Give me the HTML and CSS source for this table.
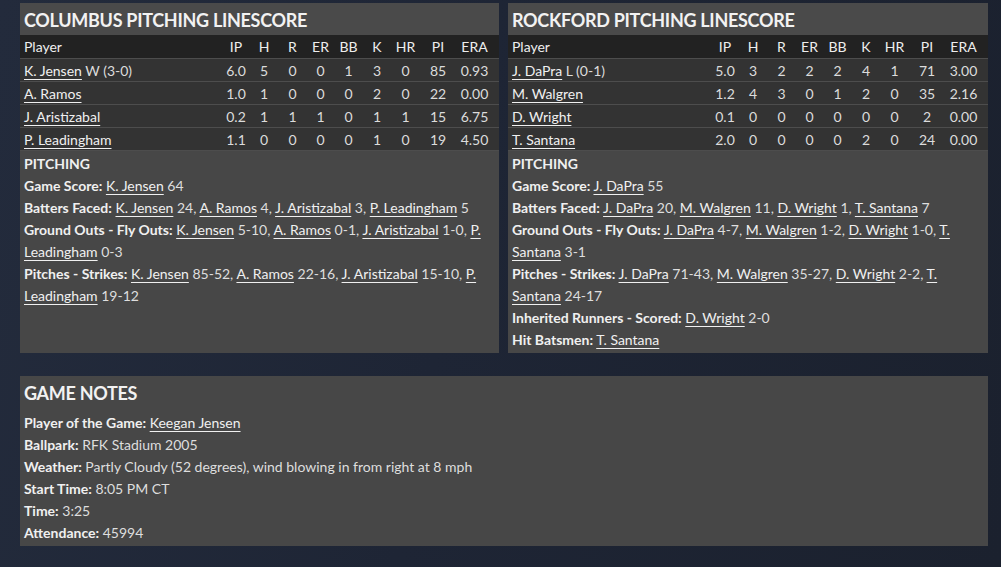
FILE: index.html
```html
<!DOCTYPE html>
<html>
<head>
<meta charset="utf-8">
<title>Pitching Linescore</title>
<link rel="stylesheet" href="styles.css">
</head>
<body>
<div class="page">
  <div class="top">
    <section class="panel">
      <h2 class="panel-title">COLUMBUS PITCHING LINESCORE</h2>
      <div class="linescore">
        <div class="row head"><span class="player">Player</span><span>IP</span><span>H</span><span>R</span><span>ER</span><span>BB</span><span>K</span><span>HR</span><span>PI</span><span>ERA</span></div>
        <div class="row"><span class="player"><a href="#">K. Jensen</a> W (3-0)</span><span>6.0</span><span>5</span><span>0</span><span>0</span><span>1</span><span>3</span><span>0</span><span>85</span><span>0.93</span></div>
        <div class="row"><span class="player"><a href="#">A. Ramos</a></span><span>1.0</span><span>1</span><span>0</span><span>0</span><span>0</span><span>2</span><span>0</span><span>22</span><span>0.00</span></div>
        <div class="row"><span class="player"><a href="#">J. Aristizabal</a></span><span>0.2</span><span>1</span><span>1</span><span>1</span><span>0</span><span>1</span><span>1</span><span>15</span><span>6.75</span></div>
        <div class="row"><span class="player"><a href="#">P. Leadingham</a></span><span>1.1</span><span>0</span><span>0</span><span>0</span><span>0</span><span>1</span><span>0</span><span>19</span><span>4.50</span></div>
      </div>
      <div class="notes">
        <div class="subhead">PITCHING</div>
        <p><b>Game Score:</b> <a href="#">K. Jensen</a> 64</p>
        <p><b>Batters Faced:</b> <a href="#">K. Jensen</a> 24, <a href="#">A. Ramos</a> 4, <a href="#">J. Aristizabal</a> 3, <a href="#">P. Leadingham</a> 5</p>
        <p><b>Ground Outs - Fly Outs:</b> <a href="#">K. Jensen</a> 5-10, <a href="#">A. Ramos</a> 0-1, <a href="#">J. Aristizabal</a> 1-0, <a href="#">P.</a> <a href="#">Leadingham</a> 0-3</p>
        <p><b>Pitches - Strikes:</b> <a href="#">K. Jensen</a> 85-52, <a href="#">A. Ramos</a> 22-16, <a href="#">J. Aristizabal</a> 15-10, <a href="#">P.</a> <a href="#">Leadingham</a> 19-12</p>
      </div>
    </section>
    <section class="panel">
      <h2 class="panel-title">ROCKFORD PITCHING LINESCORE</h2>
      <div class="linescore">
        <div class="row head"><span class="player">Player</span><span>IP</span><span>H</span><span>R</span><span>ER</span><span>BB</span><span>K</span><span>HR</span><span>PI</span><span>ERA</span></div>
        <div class="row"><span class="player"><a href="#">J. DaPra</a> L (0-1)</span><span>5.0</span><span>3</span><span>2</span><span>2</span><span>2</span><span>4</span><span>1</span><span>71</span><span>3.00</span></div>
        <div class="row"><span class="player"><a href="#">M. Walgren</a></span><span>1.2</span><span>4</span><span>3</span><span>0</span><span>1</span><span>2</span><span>0</span><span>35</span><span>2.16</span></div>
        <div class="row"><span class="player"><a href="#">D. Wright</a></span><span>0.1</span><span>0</span><span>0</span><span>0</span><span>0</span><span>0</span><span>0</span><span>2</span><span>0.00</span></div>
        <div class="row"><span class="player"><a href="#">T. Santana</a></span><span>2.0</span><span>0</span><span>0</span><span>0</span><span>0</span><span>2</span><span>0</span><span>24</span><span>0.00</span></div>
      </div>
      <div class="notes">
        <div class="subhead">PITCHING</div>
        <p><b>Game Score:</b> <a href="#">J. DaPra</a> 55</p>
        <p><b>Batters Faced:</b> <a href="#">J. DaPra</a> 20, <a href="#">M. Walgren</a> 11, <a href="#">D. Wright</a> 1, <a href="#">T. Santana</a> 7</p>
        <p><b>Ground Outs - Fly Outs:</b> <a href="#">J. DaPra</a> 4-7, <a href="#">M. Walgren</a> 1-2, <a href="#">D. Wright</a> 1-0, <a href="#">T.</a> <a href="#">Santana</a> 3-1</p>
        <p><b>Pitches - Strikes:</b> <a href="#">J. DaPra</a> 71-43, <a href="#">M. Walgren</a> 35-27, <a href="#">D. Wright</a> 2-2, <a href="#">T.</a> <a href="#">Santana</a> 24-17</p>
        <p><b>Inherited Runners - Scored:</b> <a href="#">D. Wright</a> 2-0</p>
        <p><b>Hit Batsmen:</b> <a href="#">T. Santana</a></p>
      </div>
    </section>
  </div>
  <section class="panel game-notes">
    <h2 class="panel-title">GAME NOTES</h2>
    <div class="notes">
      <p><b>Player of the Game:</b> <a href="#">Keegan Jensen</a></p>
      <p><b>Ballpark:</b> RFK Stadium 2005</p>
      <p><b>Weather:</b> Partly Cloudy (52 degrees), wind blowing in from right at 8 mph</p>
      <p><b>Start Time:</b> 8:05 PM CT</p>
      <p><b>Time:</b> 3:25</p>
      <p><b>Attendance:</b> 45994</p>
    </div>
  </section>
</div>
</body>
</html>
```
FILE: styles.css
```css
* { box-sizing: border-box; }
html, body { margin: 0; height: 100%; }
body {
  background: linear-gradient(100deg, #232b3c 0%, #1e2535 45%, #1b212e 100%);
  font-family: "Lato", "Liberation Sans", sans-serif;
  color: #e6e6e6;
  font-size: 14px;
}
.page {
  width: 968px;
  margin-left: 20px;
  padding-top: 3px;
}
.top {
  display: flex;
  gap: 9px;
}
.panel {
  background: #474747;
  flex: 0 0 479px;
  display: flex;
  flex-direction: column;
  padding-bottom: 2px;
}
.top .panel + .panel { flex-basis: 480px; }
.panel-title {
  margin: 0;
  height: 32px;
  line-height: 32px;
  padding: 1px 4px 0;
  font-size: 18px;
  letter-spacing: -0.3px;
  font-weight: 700;
  color: #f2f2f2;
  background: #4a4a4a;
}
.linescore { display: flex; flex-direction: column; }
.row {
  display: grid;
  grid-template-columns: 1fr 28px 28px 29px 27px 29px 28px 29px 36px 37px;
  padding: 0 6px 0 4px;
  height: 23px;
  align-items: center;
  background: #333333;
  border-top: 1px solid #4d4d4d;
  color: #dcdcdc;
}
.row span { text-align: center; white-space: nowrap; }
.row .player { text-align: left; }
.row.head {
  background: #222222;
  border-top: 0;
  color: #eeeeee;
}
.row:last-child { border-bottom: 1px solid #4d4d4d; height: 24px; }
a {
  color: #f0f0f0;
  text-decoration: underline;
  text-underline-offset: 3px;
  text-decoration-thickness: 1px;
}
.notes {
  padding: 2px 4px 0;
  line-height: 22px;
}
.notes p { margin: 0; color: #dedede; }
.notes b { font-weight: 700; color: #f0f0f0; }
.subhead { font-weight: 700; color: #f0f0f0; }
.game-notes {
  margin-top: 23px;
  width: 968px;
  background: #474747;
}
.game-notes .panel-title { background: #474747; }
.game-notes .notes { padding-top: 4px; }
```
